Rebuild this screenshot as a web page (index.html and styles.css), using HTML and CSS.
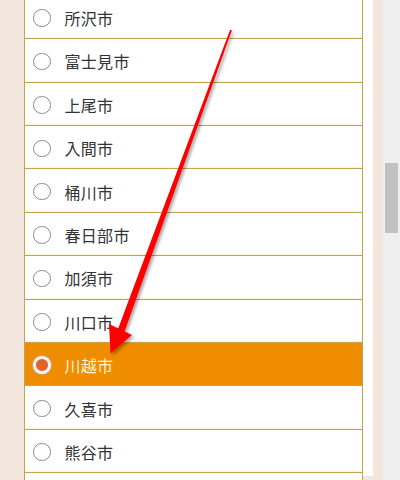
FILE: index.html
```html
<!DOCTYPE html>
<html lang="ja">
<head>
<meta charset="utf-8">
<link rel="stylesheet" href="styles.css">
</head>
<body>
<div class="screen">
  <div class="page">
    <div class="panel">
      <ul class="list">
        <li class="row"><span class="radio"></span><span class="label">所沢市</span></li>
        <li class="row"><span class="radio"></span><span class="label">富士見市</span></li>
        <li class="row"><span class="radio"></span><span class="label">上尾市</span></li>
        <li class="row"><span class="radio"></span><span class="label">入間市</span></li>
        <li class="row"><span class="radio"></span><span class="label">桶川市</span></li>
        <li class="row"><span class="radio"></span><span class="label">春日部市</span></li>
        <li class="row"><span class="radio"></span><span class="label">加須市</span></li>
        <li class="row"><span class="radio"></span><span class="label">川口市</span></li>
        <li class="row selected"><span class="radio"></span><span class="label">川越市</span></li>
        <li class="row"><span class="radio"></span><span class="label">久喜市</span></li>
        <li class="row"><span class="radio"></span><span class="label">熊谷市</span></li>
        <li class="row"></li>
      </ul>
    </div>
  </div>
  <div class="scrollbar"><div class="thumb"></div></div>
  <svg class="arrow" width="400" height="480" viewBox="0 0 400 480">
    <defs>
      <filter id="sh" x="-20%" y="-20%" width="140%" height="140%">
        <feDropShadow dx="2" dy="2" stdDeviation="1.6" flood-color="#000" flood-opacity="0.35"/>
      </filter>
    </defs>
    <g filter="url(#sh)" fill="#ff0000">
      <polygon points="230.1,29.7 231.9,30.3 124.3,332.2 117.7,329.8"/>
      <polygon points="109,324 132,335 110.5,353.5"/>
    </g>
  </svg>
</div>
</body>
</html>
```

FILE: styles.css
```css
html, body {
  margin: 0;
  padding: 0;
}
body {
  width: 400px;
  height: 480px;
  overflow: hidden;
  background: #f3e6dd;
  font-family: "Noto Sans CJK JP", "Noto Sans", sans-serif;
}
.screen {
  position: relative;
  display: flex;
  width: 400px;
  height: 480px;
  overflow: hidden;
}
.page {
  width: 383px;
  height: 480px;
  padding-left: 24px;
  padding-right: 10px;
  box-sizing: border-box;
}
.panel {
  background: #ffffff;
  height: 100%;
  padding-right: 10px;
}
.list {
  list-style: none;
  margin: -4.1px 0 0 0;
  padding: 0;
  border-left: 1px solid #bfa453;
  border-right: 1px solid #bfa453;
}
.row {
  display: flex;
  align-items: center;
  height: 43.4px;
  box-sizing: border-box;
  border-bottom: 1px solid #bfa453;
  padding-left: 8px;
  padding-top: 2px;
  background: #fff;
  box-shadow: inset 0 -2px 1px -1px #fff6d6;
}
.radio {
  width: 17.5px;
  height: 17.5px;
  box-sizing: border-box;
  border: 1.5px solid #8a8a8a;
  border-radius: 50%;
  background: #fff;
  flex: none;
}
.label {
  margin-left: 14px;
  font-size: 16px;
  color: #333333;
  letter-spacing: 0.3px;
}
.row.selected {
  background: #ef8c00;
  box-shadow: none;
}
.row.selected .radio {
  border: 3px solid #fbf3ea;
  background: #e1622a;
  box-shadow: 0 0 0 1px #c9a67a;
}
.row.selected .label {
  color: #fff3d2;
}
.scrollbar {
  width: 17px;
  height: 480px;
  background: #efefef;
  position: relative;
}
.thumb {
  position: absolute;
  left: 2px;
  top: 163px;
  width: 13px;
  height: 70px;
  background: #c1c1c1;
}
.arrow {
  position: absolute;
  left: 0;
  top: 0;
  pointer-events: none;
}
```
